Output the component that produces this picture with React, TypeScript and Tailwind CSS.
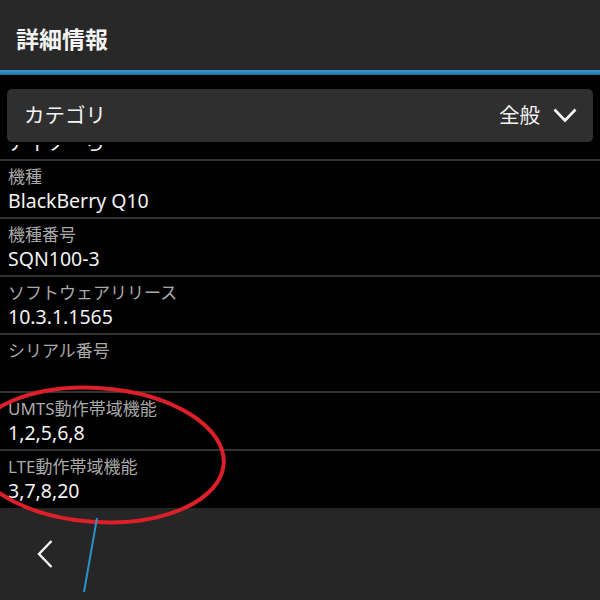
import React from "react";

type Row = { label: string; value: string };

const rows: Row[] = [
  { label: "名前", value: "アイソーら" },
  { label: "機種", value: "BlackBerry Q10" },
  { label: "機種番号", value: "SQN100-3" },
  { label: "ソフトウェアリリース", value: "10.3.1.1565" },
  { label: "シリアル番号", value: "" },
  { label: "UMTS動作帯域機能", value: "1,2,5,6,8" },
  { label: "LTE動作帯域機能", value: "3,7,8,20" },
];

function InfoRow({ label, value }: Row) {
  return (
    <div className="h-[58px] border-t-2 border-[#333333] px-2 pt-[5px]">
      <p className="text-[17px] leading-[22px] text-[#a9a9a9]">{label}</p>
      <p className="h-[25px] text-[19.5px] leading-[25px] text-[#f2f2f2]">{value}</p>
    </div>
  );
}

export default function App() {
  return (
    <div className="relative flex h-[600px] w-[600px] flex-col overflow-hidden bg-black font-['Noto_Sans','Noto_Sans_CJK_JP',sans-serif]">
      <header className="h-[70px] bg-[#282828] px-4 pt-[28px]">
        <h1 className="text-[23px] font-bold leading-[23px] text-[#f4f4f4]">詳細情報</h1>
      </header>
      <div className="h-[5px] bg-[linear-gradient(180deg,#3a9ad0_0%,#2887b6_60%,#1d6a90_100%)]" />

      <div className="px-[7px] pb-[3px] pt-[14px]">
        <div className="flex h-[53px] items-center justify-between rounded-[5px] bg-[#2f2f2f] pl-[17px] pr-[16px]">
          <span className="text-[20.5px] text-[#f4f4f4]">カテゴリ</span>
          <div className="flex items-center gap-[13px]">
            <span className="text-[20.5px] text-[#f4f4f4]">全般</span>
            <svg width="24" height="15" viewBox="0 0 24 15" fill="none">
              <polyline points="1.5,1.5 12,12.5 22.5,1.5" stroke="#f4f4f4" strokeWidth="2.6" />
            </svg>
          </div>
        </div>
      </div>

      <div className="h-[363px] overflow-hidden">
        <div className="-mt-[44px]">
          {rows.map((r) => (
            <InfoRow key={r.label} label={r.label} value={r.value} />
          ))}
        </div>
      </div>

      <footer className="flex flex-1 items-center bg-[#262626] pl-[37px]">
        <svg width="16" height="28" viewBox="0 0 16 28" fill="none">
          <polyline points="14.5,1 2,14 14.5,27" stroke="#f4f4f4" strokeWidth="2.4" />
        </svg>
      </footer>

      {/* hand-drawn markup on top of the screenshot */}
      <svg
        className="pointer-events-none absolute inset-0"
        width="600"
        height="600"
        viewBox="0 0 600 600"
        fill="none"
      >
        <ellipse
          cx="97"
          cy="455"
          rx="127"
          ry="67"
          transform="rotate(4 97 455)"
          stroke="#dd1f2a"
          strokeWidth="4"
        />
        <line x1="97" y1="518" x2="84" y2="592" stroke="#2b90c4" strokeWidth="2" />
      </svg>
    </div>
  );
}
